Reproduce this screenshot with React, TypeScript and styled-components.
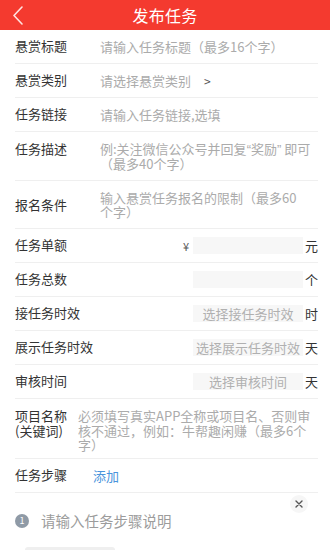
import React from 'react'
import styled, { createGlobalStyle } from 'styled-components'

const GlobalStyle = createGlobalStyle`
  html, body {
    margin: 0;
    padding: 0;
    background: #ffffff;
  }
  body {
    font-family: 'Noto Sans CJK SC', 'Noto Sans', sans-serif;
    -webkit-font-smoothing: antialiased;
  }
`

const Page = styled.div`
  width: 330px;
  height: 550px;
  overflow: hidden;
  background: #ffffff;
`

const Header = styled.div`
  position: relative;
  height: 30px;
  background: #f43a2f;
  display: flex;
  align-items: center;
  justify-content: center;
`

const BackButton = styled.button`
  position: absolute;
  left: 6px;
  top: 3px;
  width: 24px;
  height: 24px;
  padding: 0;
  border: 0;
  background: transparent;
  display: flex;
  align-items: center;
  justify-content: center;
`

const Title = styled.h1`
  margin: 0;
  font-size: 16px;
  font-weight: 400;
  color: #ffffff;
  letter-spacing: 0.3px;
`

const Form = styled.div`
  padding-left: 15px;
  padding-right: 12px;
`

const Row = styled.div<{ $align?: string; $pt?: number; $pb?: number }>`
  display: flex;
  align-items: ${({ $align }) => $align || 'center'};
  box-sizing: border-box;
  min-height: 34px;
  padding-top: ${({ $pt }) => $pt || 0}px;
  padding-bottom: ${({ $pb }) => $pb || 0}px;
  border-bottom: 1px solid #efefef;
`

const Label = styled.div<{ $w?: number }>`
  flex: 0 0 ${({ $w }) => $w || 85}px;
  font-size: 13px;
  line-height: 14.5px;
  color: #333333;
  white-space: nowrap;
`

const Placeholder = styled.div<{ $lh?: number }>`
  flex: 1;
  font-size: 13px;
  line-height: ${({ $lh }) => $lh || 14}px;
  color: #ababab;
  white-space: nowrap;
`

// quotes in the reference are narrow western glyphs
const Quote = styled.span`
  font-family: 'Liberation Sans', sans-serif;
`

const Chevron = styled.span`
  display: inline-block;
  margin-left: 13px;
  color: #555555;
  font-size: 12px;
`

const FieldGroup = styled.div`
  margin-left: auto;
  display: flex;
  align-items: center;
`

const Prefix = styled.span`
  font-size: 11px;
  color: #555555;
  margin-right: 4px;
`

const FieldBox = styled.div`
  width: 110px;
  height: 17px;
  background: #f7f7f7;
  font-size: 13px;
  line-height: 17px;
  color: #b0b0b0;
  text-align: center;
  white-space: nowrap;
`

const Unit = styled.span`
  width: 13px;
  margin-left: 2px;
  font-size: 13px;
  color: #333333;
`

const AddLink = styled.span`
  margin-left: -7px;
  font-size: 13px;
  color: #4a94dc;
`

const StepCard = styled.div`
  padding: 0 0 0 15px;
`

const StepTop = styled.div`
  display: flex;
  justify-content: flex-end;
  padding: 2px 22px 0 0;
`

const CloseButton = styled.button`
  width: 18px;
  height: 18px;
  padding: 0;
  border: 0;
  border-radius: 50%;
  background: #f6f6f6;
  display: flex;
  align-items: center;
  justify-content: center;
`

const StepLine = styled.div`
  display: flex;
  align-items: center;
  height: 16px;
`

const StepNumber = styled.span`
  width: 14px;
  height: 14px;
  border-radius: 50%;
  background: #8f9aa6;
  color: #ffffff;
  font-size: 9px;
  line-height: 14px;
  text-align: center;
  margin-right: 12px;
`

const StepText = styled.span`
  font-size: 14.5px;
  line-height: 16px;
  color: #9c9c9c;
`

const UploadBox = styled.div`
  margin: 18px 0 0 10px;
  width: 90px;
  height: 60px;
  border-radius: 3px;
  background: #efefef;
`

const fields = [
  { label: '任务单额', prefix: '¥', value: '', unit: '元' },
  { label: '任务总数', value: '', unit: '个' },
  { label: '接任务时效', value: '选择接任务时效', unit: '时' },
  { label: '展示任务时效', value: '选择展示任务时效', unit: '天' },
  { label: '审核时间', value: '选择审核时间', unit: '天' },
]

const App: React.FC = () => {
  return (
    <>
      <GlobalStyle />
      <Page>
        <Header>
          <BackButton aria-label="返回">
            <svg width="12" height="20" viewBox="0 0 12 20">
              <path d="M10 2 L2 10.5 L10 19" fill="none" stroke="#ffe3e0" strokeWidth="1.6" strokeLinecap="round" strokeLinejoin="round" />
            </svg>
          </BackButton>
          <Title>发布任务</Title>
        </Header>

        <Form>
          <Row>
            <Label>悬赏标题</Label>
            <Placeholder>请输入任务标题（最多16个字）</Placeholder>
          </Row>
          <Row>
            <Label>悬赏类别</Label>
            <Placeholder>
              请选择悬赏类别<Chevron>&gt;</Chevron>
            </Placeholder>
          </Row>
          <Row>
            <Label>任务链接</Label>
            <Placeholder>请输入任务链接,选填</Placeholder>
          </Row>
          <Row $align="flex-start" $pt={10} $pb={9}>
            <Label>任务描述</Label>
            <Placeholder>
              例:关注微信公众号并回复<Quote>“</Quote>奖励<Quote>”</Quote> 即可
              <br />
              （最多40个字）
            </Placeholder>
          </Row>
          <Row $pt={10} $pb={9}>
            <Label>报名条件</Label>
            <Placeholder>
              输入悬赏任务报名的限制（最多60
              <br />
              个字）
            </Placeholder>
          </Row>

          {fields.map((f) => (
            <Row key={f.label}>
              <Label>{f.label}</Label>
              <FieldGroup>
                {f.prefix && <Prefix>{f.prefix}</Prefix>}
                <FieldBox>{f.value}</FieldBox>
                <Unit>{f.unit}</Unit>
              </FieldGroup>
            </Row>
          ))}

          <Row $align="flex-start" $pt={10} $pb={5}>
            <Label $w={63}>
              项目名称
              <br />
              (关键词)
            </Label>
            <Placeholder $lh={14.5}>
              必须填写真实APP全称或项目名、否则审
              <br />
              核不通过，例如：牛帮趣闲赚（最多6个
              <br />
              字）
            </Placeholder>
          </Row>
          <Row>
            <Label>任务步骤</Label>
            <AddLink>添加</AddLink>
          </Row>
        </Form>

        <StepCard>
          <StepTop>
            <CloseButton aria-label="删除">
              <svg width="8" height="8" viewBox="0 0 8 8">
                <path d="M1 1 L7 7 M7 1 L1 7" stroke="#555" strokeWidth="1.4" strokeLinecap="round" />
              </svg>
            </CloseButton>
          </StepTop>
          <StepLine>
            <StepNumber>1</StepNumber>
            <StepText>请输入任务步骤说明</StepText>
          </StepLine>
          <UploadBox />
        </StepCard>
      </Page>
    </>
  )
}

export default App
